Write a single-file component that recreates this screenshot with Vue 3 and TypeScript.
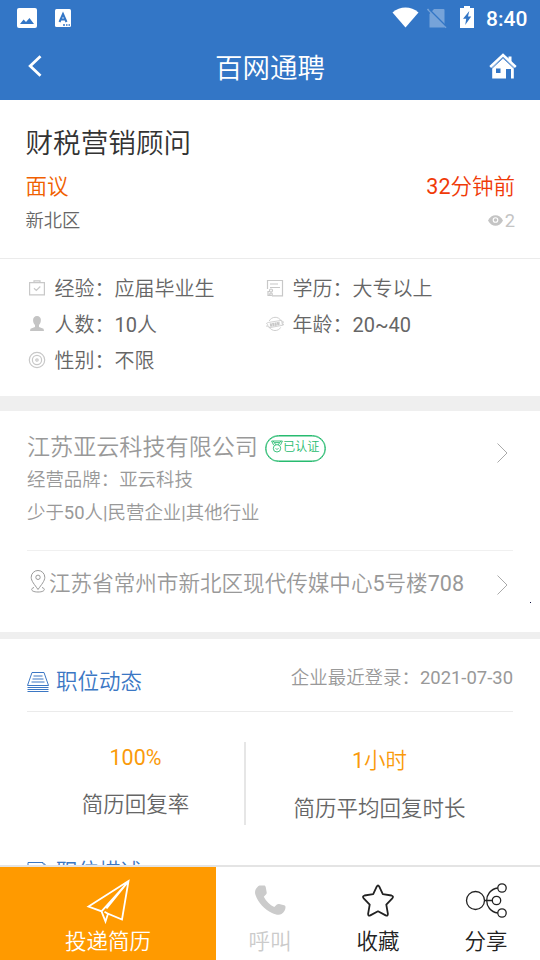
<script setup lang="ts">
interface Fact { icon: string; label: string; value: string }
interface Stat { value: string; label: string }

const facts: Fact[] = [
  { icon: 'case', label: '经验', value: '应届毕业生' },
  { icon: 'form', label: '学历', value: '大专以上' },
  { icon: 'person', label: '人数', value: '10人' },
  { icon: 'planet', label: '年龄', value: '20~40' },
  { icon: 'target', label: '性别', value: '不限' },
]
const stats: Stat[] = [
  { value: '100%', label: '简历回复率' },
  { value: '1小时', label: '简历平均回复时长' },
]
</script>

<template>
  <div class="screen">
    <header class="top">
      <div class="status">
        <svg class="s-pic" width="20" height="20" viewBox="0 0 20 20"><rect width="20" height="20" rx="2" fill="#fff" /><path d="M3 16l3.600-4.500 2.400 2.600L12.500 10l4.500 6z" fill="#3376c6" /></svg>
        <svg class="s-app" width="16" height="18" viewBox="0 0 16 18"><rect width="16" height="18" rx="1.500" fill="#fff" /><path d="M4.500 13L8 5l3.500 8M5.800 10.500h4.400" fill="none" stroke="#3376c6" stroke-width="2" /><path d="M8 16h2M11 16h1.500M13.500 16H15" stroke="#3376c6" stroke-width="1.300" /></svg>
        <span class="grow"></span>
        <svg class="s-wifi" width="27" height="21" viewBox="0 0 27 21"><path d="M.5 5.500C8-1.200 19-1.200 26.500 5.500L13.500 20.500z" fill="#fff" /></svg>
        <svg class="s-sim" width="20" height="21" viewBox="0 0 20 21"><path d="M7 1h9.500q1 0 1 1v17.500h-15V6z" fill="#76a3d9" /><path d="M.5 1L19 19.800" stroke="#76a3d9" stroke-width="1.600" /><path d="M2.500 1.500L19 18" stroke="#3376c6" stroke-width="1.200" /></svg>
        <svg class="s-bat" width="14" height="22" viewBox="0 0 14 22"><path d="M4 0h6v2h4v20H0V2h4z" fill="#fff" /><path d="M9.300 5L3 12.800h3.200L5.200 19 11.200 10.500H8z" fill="#3376c6" /></svg>
        <span class="clock">8:40</span>
      </div>
      <div class="nav">
        <svg class="back" width="14" height="22" viewBox="0 0 14 22"><path d="M12.500 1.200L2.200 11l10.300 9.800" fill="none" stroke="#fff" stroke-width="2.800" /></svg>
        <h1>百网通聘</h1>
        <svg class="home" width="28" height="26" viewBox="0 0 28 26"><path d="M1.200 14L14 2l12.800 12" fill="none" stroke="#fff" stroke-width="2.500" /><path d="M19.500 3.500h3v7l-3-3z" fill="#fff" /><path d="M3.200 14.600L14 4.600l10.800 10V25.500h-2.800V16h-5v9.500H3.200z" fill="#fff" /><path d="M3.200 15.200L14 5.200l10.800 10" fill="none" stroke="#3376c6" stroke-width=".8" /><rect x="7" y="15.500" width="4.500" height="4.500" fill="#3376c6" /></svg>
      </div>
    </header>

    <main>
      <section class="job">
        <h2>财税营销顾问</h2>
        <div class="pay"><span>面议</span><span class="time">32分钟前</span></div>
        <div class="place">
          <span>新北区</span>
          <span class="views"><svg width="15" height="11" viewBox="0 0 15 11"><path d="M0 5.500C3.500-1.600 11.500-1.600 15 5.500 11.500 12.600 3.500 12.600 0 5.500z" fill="#c4c4c4" /><circle cx="7.500" cy="5" r="2.300" fill="#c4c4c4" stroke="#fff" stroke-width="1.100" /></svg>2</span>
        </div>
      </section>

      <section class="facts">
        <div v-for="f in facts" :key="f.label" class="fact">
          <svg width="18" height="18" viewBox="0 0 18 18" fill="none" stroke="#c8c8c8" stroke-width="1.200">
            <template v-if="f.icon === 'case'"><path d="M1.600 3.600h14.800v12.300H1.600zM6 3V1.800h6V3M6 9.300l2.300 2.200 4-4" /></template>
            <template v-else-if="f.icon === 'form'"><path d="M1.500 10V1.500h15v15.300H6M4 5h8M4 8.500h10M4 12.500H2v3.800h3" /><circle cx="5" cy="11.500" r="1.500" /><circle cx="5" cy="15.200" r="1.300" /></template>
            <template v-else-if="f.icon === 'person'"><path d="M9 1C3.800 1 4.500 8 7 10v2l-4.500 1.700L2 16h14l-.5-2.300L11 12v-2C13.500 8 14.200 1 9 1z" fill="#c4c4c4" stroke="none" /></template>
            <template v-else-if="f.icon === 'planet'"><path d="M3.200 6C5.500 1.300 12.500 1 15 5.700M3.400 12.200c2.200 4.400 9 4.400 11.300.2" stroke-width=".9" /><path d="M2.200 7.500l13.500-2.200.7 5L3 12.800l-.2-1.700-2.300.2 1.200-1.500L.5 8.400zM15.700 6.700l2 .2-1.200 1.200 1.200 1.700-1.500.2" stroke-width=".8" /><path d="M4 10.200l10-1.900" stroke-width="3.400" stroke-dasharray="2 .4" /></template>
            <template v-else><circle cx="9" cy="9" r="7.700" /><circle cx="9" cy="9" r="4.600" /><circle cx="9" cy="9" r="1.200" /></template>
          </svg>
          <span>{{ f.label }}：{{ f.value }}</span>
        </div>
      </section>

      <section class="company">
        <div class="profile">
          <div>
            <div class="name">
              <span>江苏亚云科技有限公司</span>
              <span class="badge"><svg width="12" height="13" viewBox="0 0 12 13" fill="none" stroke="#28bb70" stroke-width=".9"><path d="M.6 1h10.800L9.500 5M.6 1l2 4M2.200 1l2.600 3.800M9.800 1L7.200 4.800M3.500 2.600h5" /><circle cx="6" cy="8.300" r="3.700" /><path d="M4.600 8.200L6 9.600l1.500-1.500" /></svg>已认证</span>
            </div>
            <p>经营品牌：亚云科技</p>
            <p>少于50人|民营企业|其他行业</p>
          </div>
          <svg class="chev" width="11" height="20" viewBox="0 0 11 20"><path d="M.5.500l9.500 9.500-9.500 9.500" /></svg>
        </div>
        <div class="address">
          <svg class="pin" width="16" height="23" viewBox="0 0 16 23" fill="none" stroke="#999" stroke-width="1"><path d="M8 19.500C4.500 14.500 1.200 11 1.200 7.300a6.800 6.800 0 0113.600 0C14.800 11 11.500 14.500 8 19.500z" /><circle cx="8" cy="7.300" r="2.200" /><path d="M4 17.500c-4 1.200-3 4.500 4 4.500s8-3.300 4-4.500" /></svg>
          <span>江苏省常州市新北区现代传媒中心5号楼708</span>
          <svg class="chev" width="11" height="20" viewBox="0 0 11 20"><path d="M.5.500l9.500 9.500-9.500 9.500" /></svg>
        </div>
      </section>

      <section class="activity">
        <div class="heading">
          <svg width="22" height="21" viewBox="0 0 22 21" fill="none" stroke="#3b77c4" stroke-width="1"><path d="M.5 14.500L5 1.500h12l4.500 13zM6.500 5h9M5.500 8h11M4.500 11h13M.5 16.500h21M.5 18.500h21M.5 20.500h21" /></svg>
          <h3>职位动态</h3>
          <span>企业最近登录：2021-07-30</span>
        </div>
        <div class="stats">
          <div v-for="s in stats" :key="s.label" class="stat"><strong>{{ s.value }}</strong><span>{{ s.label }}</span></div>
        </div>
        <div class="heading next">
          <svg width="22" height="21" viewBox="0 0 22 21" fill="none" stroke="#3b77c4" stroke-width="1"><path d="M1 1.500h15l4 4V19H1zM15 1.500l5 5M5 7h8M5 11h10" /></svg>
          <h3>职位描述</h3>
        </div>
      </section>
    </main>

    <i class="speck"></i>

    <footer class="bar">
      <div class="tab apply">
        <svg width="46" height="46" viewBox="0 0 46 46" fill="none" stroke="#fff" stroke-width="1.800"><path d="M43.500 3L3.500 28.500l13 4.800 4 10.200 2.500-7.800 14 5.800zM42.500 4.500L21.500 30.500M42.500 4.500L16.500 33.300M23 35.700l-3.500-2" /></svg>
        <span>投递简历</span>
      </div>
      <div class="tab call">
        <svg width="46" height="46" viewBox="0 0 46 46"><path d="M12.500 7.600L17 7.500c1 0 1.500.7 1.700 1.600l1 5.400c.1 1-.3 1.500-1 2.200l-1.900 2c2.300 4.500 6 8.100 10.500 10.300l2.600-2.400c.6-.6 1.400-.8 2.200-.6l5 1.300c1 .3 1.500 1 1.400 2 0 2.300-1.200 5-4 6.700-2.500 1.400-6 .5-9.500-1.100C17.500 31.500 11 24.500 8.500 17c-1.500-4.500 1.200-8 4-9.400z" fill="#cbcbcb" /></svg>
        <span>呼叫</span>
      </div>
      <div class="tab">
        <svg width="46" height="46" viewBox="0 0 46 46" fill="none" stroke="#222" stroke-width="1.800" stroke-linejoin="round"><path d="M21.700 8.600Q23 6.400 24.300 8.600L27.800 16.200 36.500 17.500Q39 18.300 37.300 20.300L31.300 26.700 32.900 35.800Q32.900 38.200 30.700 37.400L23 33.300 15.300 37.400Q13.100 38.200 13.100 35.800L14.700 26.700 8.700 20.300Q7 18.300 9.500 17.500L18.200 16.200z" /></svg>
        <span>收藏</span>
      </div>
      <div class="tab">
        <svg width="46" height="46" viewBox="0 0 46 46" fill="none" stroke="#222" stroke-width="1.300"><circle cx="12.500" cy="22.500" r="9" /><circle cx="39" cy="10" r="4.200" /><circle cx="33.500" cy="22.500" r="4.200" /><circle cx="39" cy="35" r="4.200" /><path d="M21.500 22.500H29.300M34.800 10C20 12 20 33 34.800 35" /></svg>
        <span>分享</span>
      </div>
    </footer>
  </div>
</template>

<style>
body { margin: 0; overflow: hidden; }
</style>

<style scoped>
.screen { position: relative; display: flex; flex-direction: column; width: 540px; height: 960px; overflow: hidden; background: #fff; color: #666; font-family: Roboto, "Noto Sans CJK SC DemiLight", "Noto Sans CJK SC", sans-serif; font-weight: 400; }
h1, h2, h3, p { margin: 0; font-weight: inherit; }
svg { display: block; flex: none; }
.top { flex: none; height: 100px; background: #3376c6; color: #fff; }
.status { display: flex; align-items: center; height: 36px; padding: 0 12px 0 17px; }
.s-app { margin-left: 18px; }
.grow { flex: 1; }
.s-wifi { margin: -2px 8px 0 0; }
.s-sim { margin-right: 13px; }
.s-bat { margin-right: 12px; margin-top: -2px; }
.clock { font-size: 21px; font-weight: 500; line-height: 40px; width: 42px; padding-top: 2px; white-space: nowrap; }
.nav { display: grid; grid-template-columns: 60px 1fr 60px; align-items: center; height: 62px; }
.nav .back { margin-left: 28px; margin-top: -5px; }
.nav h1 { text-align: center; font-size: 27.5px; line-height: 62px; padding-top: 2px; }
.nav .home { margin-left: 9px; margin-top: -5px; }
main { flex: 1; min-height: 0; overflow: hidden; }
.job { box-sizing: border-box; height: 159px; padding: 27px 25px 0 25.500px; border-bottom: 1px solid #ebebeb; }
.job h2 { font-size: 27.6px; line-height: 34px; color: #333; }
.pay { display: flex; justify-content: space-between; margin-top: 7px; font-size: 21.5px; line-height: 38px; color: #f06000; }
.time { color: #f03a08; }
.place { display: flex; justify-content: space-between; font-size: 18.3px; line-height: 30px; }
.views { display: flex; align-items: center; gap: 2px; color: #c4c4c4; }
.views svg { margin-top: -2px; }
.facts { box-sizing: border-box; display: grid; grid-template-columns: 238px 1fr; grid-auto-rows: 36px; height: 137px; padding: 11px 28px 0; font-size: 20px; line-height: 36px; }
.fact { display: flex; align-items: center; gap: 8.5px; }
.fact span { padding-top: 2px; }
.company { box-sizing: border-box; height: 243px; padding: 16px 27px 0; border-top: 15px solid #efefef; border-bottom: 7px solid #efefef; color: #999; }
.profile { display: flex; justify-content: space-between; height: 123px; border-bottom: 1px solid #f0f0f0; }
.name { display: flex; align-items: center; gap: 7px; height: 41px; margin-bottom: -4px; font-size: 23.1px; line-height: 41px; }
.badge { box-sizing: border-box; display: flex; align-items: center; width: 61px; height: 27px; padding: 0 0 3px 5px; margin-top: 1px; border: 1.500px solid #28bb70; border-radius: 14px; color: #28bb70; font-size: 12.2px; line-height: 20px; white-space: nowrap; box-shadow: inset 0 0 0 .5px #28bb70; }
.company p { font-size: 18.45px; line-height: 33px; }
.chev { margin: 16px 5px 0 0; fill: none; stroke: #aaa; stroke-width: 1; }
.address { display: flex; align-items: center; height: 66px; font-size: 21.57px; white-space: nowrap; line-height: 66px; }
.pin { margin: 0 3px 5px; }
.address .chev { margin: 1px 5px 0 auto; }
.activity { padding: 0 27px; }
.heading { box-sizing: border-box; display: flex; align-items: center; height: 73px; border-bottom: 1px solid #ebebeb; color: #3b77c4; }
.heading svg { margin-top: 13px; }
.heading h3 { margin-left: 7px; font-size: 21.5px; line-height: 32px; padding-top: 14px; }
.heading span { margin-left: auto; color: #999; font-size: 18.45px; line-height: 30px; padding-top: 5px; }
.stats { display: grid; grid-template-columns: 217px 1fr; height: 82px; margin-top: 30px; }
.stat { display: flex; flex-direction: column; align-items: center; font-size: 21.5px; line-height: 32px; }
.stat strong { font-weight: 400; color: #fa9a0a; }
.stat span { margin-top: 15px; }
.stat + .stat { border-left: 2px solid #e6e6e6; padding-top: 3px; }
.stat + .stat span { margin-top: 16px; }
.next { border: 0; margin-top: 4px; height: 73px; }
.speck { position: absolute; left: 530px; top: 602px; width: 1px; height: 1px; background: #101040; }
.bar { box-sizing: border-box; flex: none; display: grid; grid-template-columns: 216px repeat(3, 108px); height: 95px; border-top: 2px solid #e4e4e4; background: #fff; color: #222; }
.tab { display: flex; flex-direction: column; align-items: center; padding-top: 11px; font-size: 21.5px; }
.tab span { line-height: 36px; }
.apply { background: #ff9a00; color: #fff; }
.call { color: #cbcbcb; }
</style>
